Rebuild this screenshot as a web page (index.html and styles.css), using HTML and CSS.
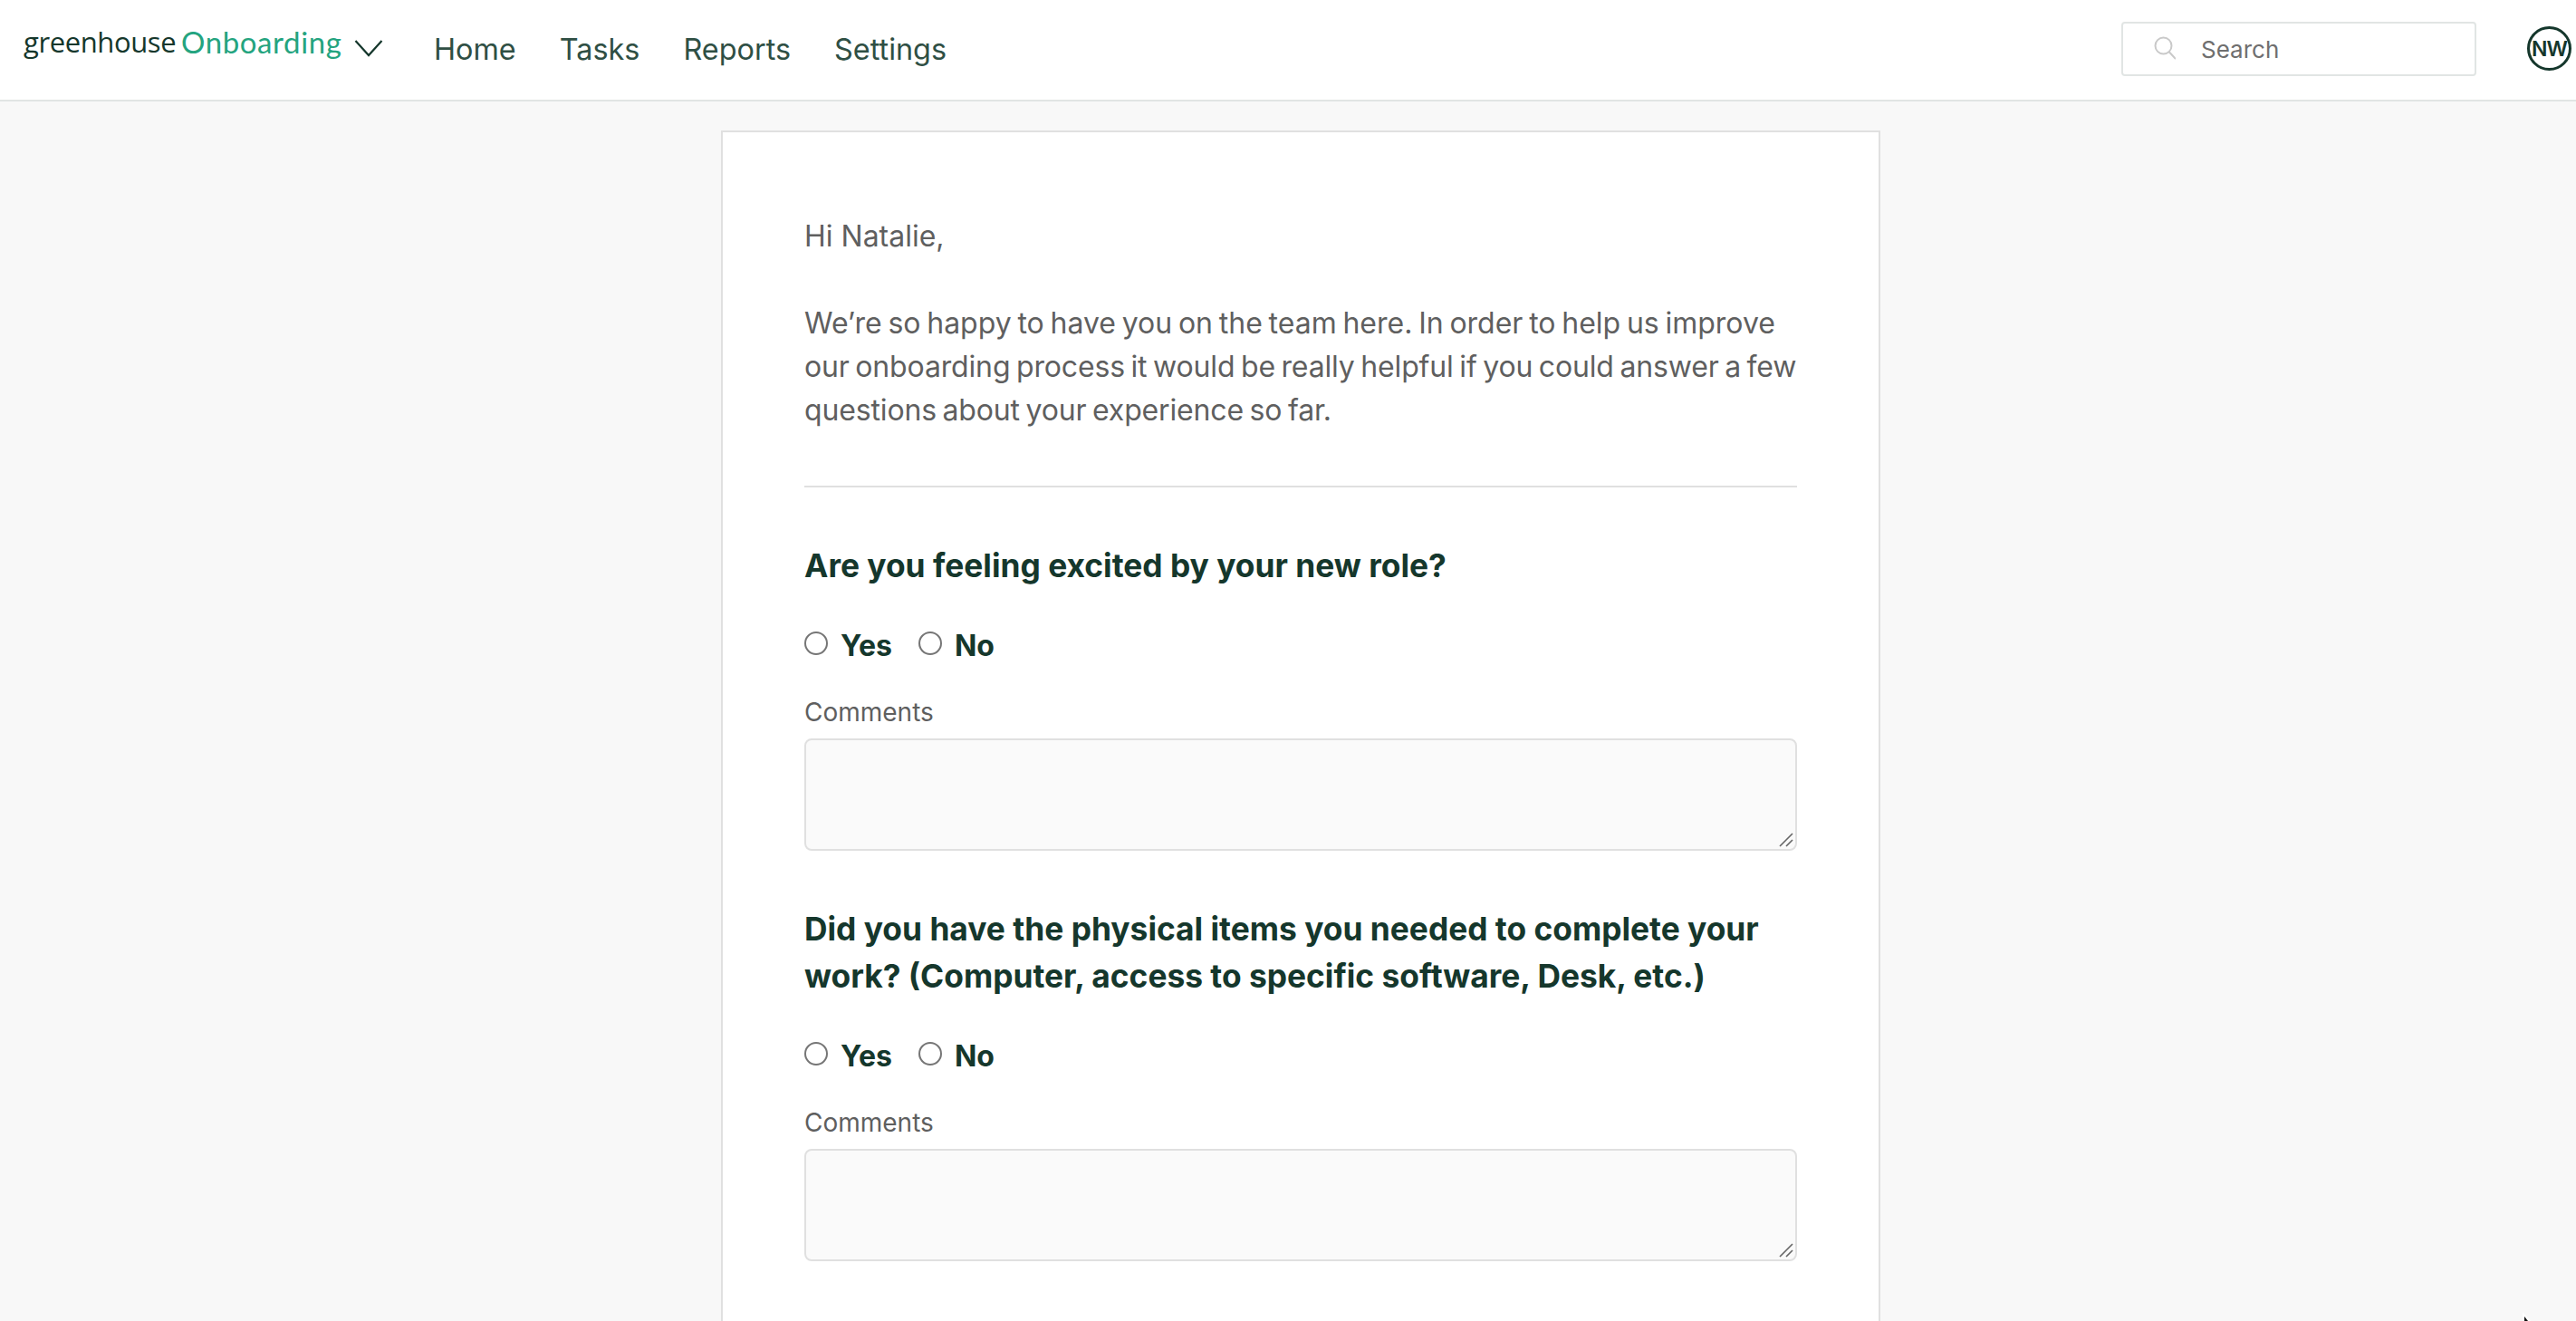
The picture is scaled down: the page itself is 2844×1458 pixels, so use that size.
FILE: index.html
```html
<!DOCTYPE html>
<html lang="en">
<head>
<meta charset="utf-8">
<title>Greenhouse Onboarding</title>
<link rel="stylesheet" href="styles.css">
</head>
<body>
<header class="topbar">
  <div class="brand">
    <span class="brand-name">greenhouse</span>
    <span class="brand-product">Onboarding</span>
    <svg class="chevron" width="32" height="20" viewBox="0 0 32 20"><path d="M1.5 2 L16 18 L30.5 2" fill="none" stroke="#15372c" stroke-width="2.2"/></svg>
  </div>
  <nav class="nav">
    <a class="nav-link">Home</a>
    <a class="nav-link">Tasks</a>
    <a class="nav-link">Reports</a>
    <a class="nav-link">Settings</a>
  </nav>
  <div class="search">
    <svg class="search-icon" width="24" height="26" viewBox="0 0 24 26"><circle cx="10.5" cy="10.5" r="9" fill="none" stroke="#c9c9c9" stroke-width="2"/><path d="M16.5 17 L24 25" stroke="#c9c9c9" stroke-width="2" fill="none"/></svg>
    <span class="search-text">Search</span>
  </div>
  <div class="avatar">NW</div>
</header>
<main class="page">
  <section class="card">
    <p class="greeting">Hi Natalie,</p>
    <p class="intro">
      <span class="intro-line">We’re so happy to have you on the team here. In order to help us improve</span>
      <span class="intro-line intro-line-tight">our onboarding process it would be really helpful if you could answer a few</span>
      <span class="intro-line intro-line-tight">questions about your experience so far.</span>
    </p>
    <hr class="divider">
    <div class="question">
      <h2 class="question-title">Are you feeling excited by your new role?</h2>
      <div class="options">
        <label class="option"><span class="radio"></span>Yes</label>
        <label class="option"><span class="radio"></span>No</label>
      </div>
      <div class="comments-label">Comments</div>
      <div class="textarea"><svg class="grip" width="16" height="16" viewBox="0 0 16 16"><path d="M1 15 L15 1 M8 15 L15 8" stroke="#666" stroke-width="1.6" fill="none"/></svg></div>
    </div>
    <div class="question">
      <h2 class="question-title">Did you have the physical items you needed to complete your work? (Computer, access to specific software, Desk, etc.)</h2>
      <div class="options">
        <label class="option"><span class="radio"></span>Yes</label>
        <label class="option"><span class="radio"></span>No</label>
      </div>
      <div class="comments-label">Comments</div>
      <div class="textarea"><svg class="grip" width="16" height="16" viewBox="0 0 16 16"><path d="M1 15 L15 1 M8 15 L15 8" stroke="#666" stroke-width="1.6" fill="none"/></svg></div>
    </div>
  </section>
</main>
<svg class="cursor" width="14" height="10" viewBox="0 0 14 10"><path d="M1 0 L1 10 L10 10 Z" fill="#fff"/><path d="M3 5 L3 10 L7 10 Z" fill="#111"/></svg>
</body>
</html>
```
FILE: styles.css
```css
* { box-sizing: border-box; }
html, body { margin: 0; height: 100%; overflow: hidden; }
body { background: #f8f8f8; font-family: Inter, "Liberation Sans", sans-serif; color: #5f5f5f; }
.topbar { height: 112px; background: #fff; border-bottom: 2px solid #e1e5e4; display: flex; align-items: center; padding: 0 5px 0 26px; }
.brand { display: flex; align-items: center; width: 453px; flex: none; margin-top: -18px; }
.brand-name { width: 174px; color: #15372c; font-family: "Open Sans", sans-serif; font-size: 31px; font-weight: 400; letter-spacing: -0.4px; }
.brand-product { width: 180px; color: #24a47f; font-family: Lato, sans-serif; font-size: 33px; font-weight: 400; letter-spacing: 0.6px; }
.chevron { margin-left: 11px; margin-top: 14px; }
.nav { display: flex; gap: 48px; font-size: 32.4px; color: #2f4f44; margin-top: -2px; }
.search { margin-left: auto; width: 392px; height: 60px; border: 2px solid #e1e5e4; border-radius: 4px; display: flex; align-items: center; padding-left: 34px; margin-top: -2px; }
.search-icon { flex: none; margin-top: -2px; }
.search-text { margin-left: 28px; font-size: 26px; color: #6f6f6f; }
.avatar { margin-left: 56px; width: 49px; height: 49px; border: 3px solid #15372c; border-radius: 50%; color: #15372c; font-size: 23px; font-weight: 600; display: flex; align-items: center; justify-content: center; flex: none; letter-spacing: -1px; margin-top: -3px; }
.page { display: flex; justify-content: center; padding-top: 32px; padding-left: 28px; }
.card { width: 1280px; background: #fff; border: 2px solid #e0e0e0; padding: 91px 90px 120px; }
.greeting, .intro { margin: 0; font-size: 32px; line-height: 48px; color: #5f5f5f; }
.greeting { margin-bottom: 48px; }
.intro { word-spacing: -2.25px; }
.intro-line { display: block; white-space: nowrap; }
.intro-line-tight { letter-spacing: -0.15px; }
.divider { border: 0; height: 2px; background: #e0e0e0; margin: 59px 0 0; }
.question-title { margin: 0; font-size: 35.35px; line-height: 52px; font-weight: 700; color: #15372c; }
.question { padding-top: 61px; }
.options { display: flex; gap: 29px; margin-top: 37px; }
.option { display: flex; align-items: center; font-size: 32px; font-weight: 700; color: #15372c; height: 48px; }
.radio { width: 26px; height: 26px; border: 2px solid #767676; border-radius: 50%; margin-right: 14px; margin-top: -4px; background: #fff; }
.comments-label { margin-top: 30px; font-size: 28px; line-height: 40px; color: #5f5f5f; }
.textarea { position: relative; margin-top: 9px; height: 124px; background: #fafafa; border: 2px solid #e0e0e0; border-radius: 8px; }
.grip { position: absolute; right: 2px; bottom: 2px; }
.cursor { position: absolute; left: 2784px; top: 1448px; }
```
